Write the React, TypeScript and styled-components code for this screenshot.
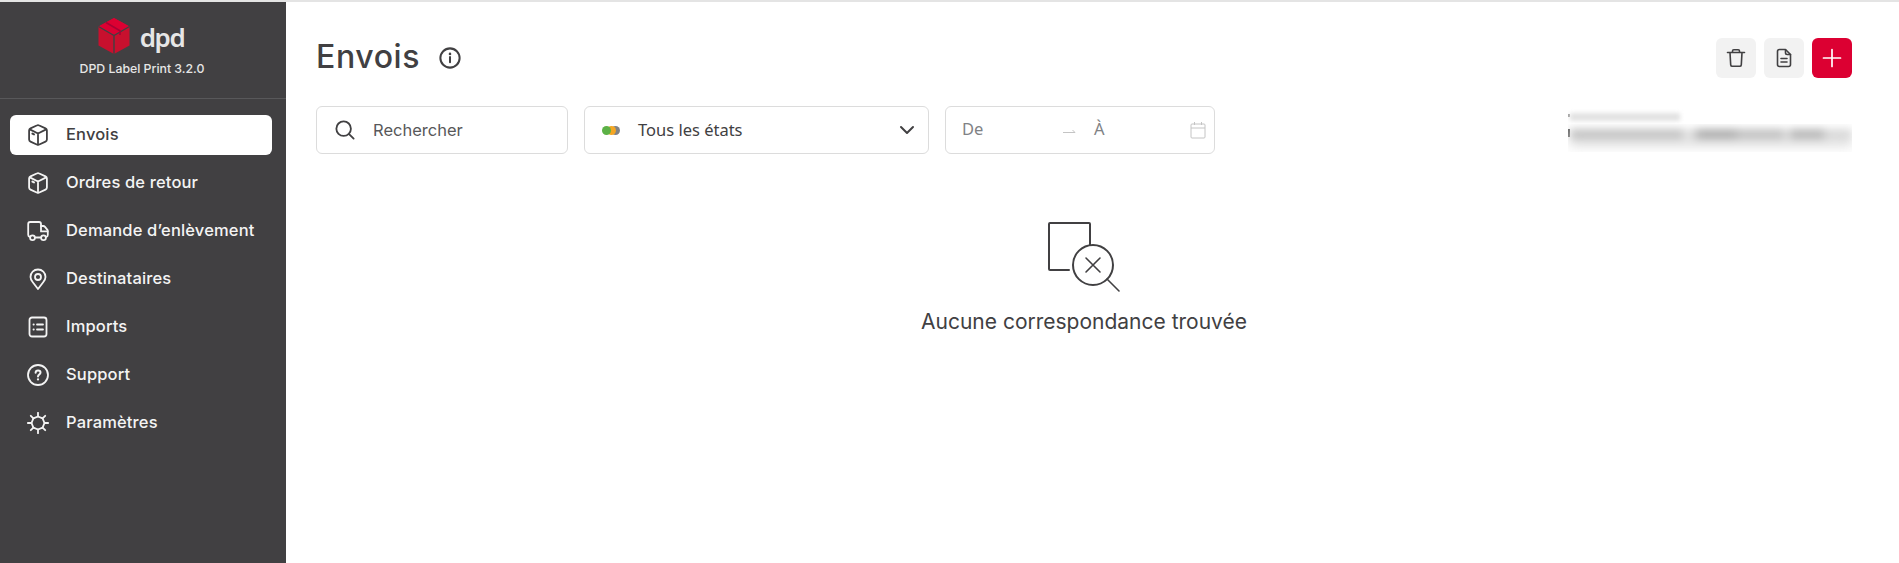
import React from "react";
import styled, { createGlobalStyle } from "styled-components";

const GlobalStyle = createGlobalStyle`
  html, body {
    margin: 0;
    height: 100%;
    overflow: hidden;
    background: #fff;
  }
  #root {
    height: 100%;
  }
`;

const BoxIcon = () => (
  <svg width="22" height="22" viewBox="0 0 22 22" fill="none" stroke="currentColor" strokeWidth="1.8" strokeLinejoin="round" strokeLinecap="round">
    <path d="M9.700 1.500c.8-.4 1.800-.4 2.600 0l6.200 2.900c.9.400 1.400 1.200 1.400 2.200v8.800c0 1-.5 1.800-1.400 2.200l-6.200 2.900c-.8.400-1.800.4-2.600 0l-6.200-2.900c-.9-.4-1.400-1.200-1.400-2.200V6.600c0-1 .5-1.800 1.400-2.200Z" />
    <path d="M2.800 5.400 11 9.500l8.200-4.100M11 9.500v11" />
    <path d="M5.400 9.600l1.600.8" strokeWidth="2" />
  </svg>
);

const TruckIcon = () => (
  <svg width="22" height="22" viewBox="0 0 22 22" fill="none" stroke="currentColor" strokeWidth="1.8" strokeLinejoin="round" strokeLinecap="round">
    <path d="M2.800 17C1.800 16.700 1.200 16 1.200 14.800V4C1.200 2.800 2 2 3.200 2H12c1.200 0 2 .8 2 2v2h2.200c.8 0 1.300.3 1.800.9l2.400 3c.3.4.4.7.4 1.200v3.700c0 1.200-.5 1.900-1.500 2.200" />
    <path d="M14 6v5.400h6.600M8.500 17.500h5" />
    <circle cx="5.500" cy="17.700" r="2.400" />
    <circle cx="16.500" cy="17.700" r="2.400" />
  </svg>
);

const PinIcon = () => (
  <svg width="22" height="22" viewBox="0 0 22 22" fill="none" stroke="currentColor" strokeWidth="1.8" strokeLinejoin="round">
    <path d="M11 21 5.800 14.300C4.400 12.500 3.500 11 3.500 9c0-4.300 3.300-7.500 7.500-7.500s7.500 3.200 7.500 7.500c0 2-.9 3.500-2.300 5.300Z" />
    <circle cx="11" cy="9" r="3" />
  </svg>
);

const ListIcon = () => (
  <svg width="22" height="22" viewBox="0 0 22 22" fill="none" stroke="currentColor" strokeWidth="1.8" strokeLinecap="round">
    <rect x="2.500" y="1.500" width="17" height="19" rx="2.500" />
    <path d="M6.500 8.500h.3M6.500 13.500h.3M10 8.500h6M10 13.500h6" />
  </svg>
);

const HelpIcon = () => (
  <svg width="22" height="22" viewBox="0 0 22 22" fill="none" stroke="currentColor" strokeWidth="1.8" strokeLinecap="round">
    <circle cx="11" cy="11" r="10" />
    <path d="M8.600 8.800c0-1.500 1-2.400 2.500-2.400s2.400.9 2.400 2.200c0 1.900-2.500 2-2.500 3.900" strokeWidth="2" />
    <path d="M11 15.300v.2" strokeWidth="2.200" />
  </svg>
);

const GearIcon = () => (
  <svg width="22" height="22" viewBox="0 0 22 22" fill="none" stroke="currentColor" strokeWidth="1.8" strokeLinecap="round" strokeLinejoin="round">
    <path d="M11 4.500 15.600 6.400 17.500 11 15.600 15.600 11 17.500 6.400 15.600 4.500 11 6.400 6.400Z" />
    <path d="M11 .8v3.700M11 17.500v3.700M.8 11h3.700M17.500 11h3.700M3.800 3.800l2.600 2.600M15.600 15.600l2.600 2.600M18.200 3.800l-2.600 2.600M6.400 15.600l-2.600 2.600" />
  </svg>
);

const menuItems = [
  { label: "Envois", icon: <BoxIcon />, active: true },
  { label: "Ordres de retour", icon: <BoxIcon /> },
  { label: "Demande d’enlèvement", icon: <TruckIcon /> },
  { label: "Destinataires", icon: <PinIcon /> },
  { label: "Imports", icon: <ListIcon /> },
  { label: "Support", icon: <HelpIcon /> },
  { label: "Paramètres", icon: <GearIcon /> },
];

export default function App() {
  return (
    <>
      <GlobalStyle />
      <Page>
        <Sidebar>
          <Brand>
            <LogoRow>
              <svg width="32" height="36" viewBox="0 0 32 36">
                <path d="M16 0 31.500 8.500V27.500L16 36 .5 27.500V8.500Z" fill="#c8102e" />
                <path d="M16 0 31.500 8.500 16 17 .5 8.500Z" fill="#dc0032" />
                <path d="M.5 8.500 16 17.500 31.500 8.500M16 17.500V36" fill="none" stroke="#414042" strokeWidth="1.400" />
                <path d="M8 4.500 22 12.800V17" fill="none" stroke="#a90034" strokeWidth="1.600" />
              </svg>
              <LogoText>dpd</LogoText>
            </LogoRow>
            <Version>DPD Label Print 3.2.0</Version>
          </Brand>
          <Menu>
            {menuItems.map((item) => (
              <MenuItem key={item.label} $active={item.active}>
                <MenuIcon>{item.icon}</MenuIcon>
                <MenuLabel>{item.label}</MenuLabel>
              </MenuItem>
            ))}
          </Menu>
        </Sidebar>
        <Main>
          <Header>
            <TitleGroup>
              <Title>Envois</Title>
              <svg width="22" height="22" viewBox="0 0 24 24" fill="none" stroke="#414042" strokeWidth="2.200" strokeLinecap="round">
                <circle cx="12" cy="12" r="10.500" />
                <path d="M12 11v5.500" />
                <path d="M12 7.500v.1" strokeWidth="2.800" />
              </svg>
            </TitleGroup>
            <Actions>
              <ActionButton>
                <svg width="20" height="20" viewBox="0 0 20 20" fill="none" stroke="#414042" strokeWidth="1.600" strokeLinecap="round" strokeLinejoin="round">
                  <path d="M1.500 4.500h17M6.500 4.500V3c0-.8.5-1.300 1.300-1.300h4.400c.8 0 1.300.5 1.300 1.300v1.500M4 4.500l.7 12.300c.1.900.7 1.500 1.600 1.500h7.400c.9 0 1.500-.6 1.600-1.500l.7-12.300" />
                </svg>
              </ActionButton>
              <ActionButton>
                <svg width="20" height="20" viewBox="0 0 20 20" fill="none" stroke="#414042" strokeWidth="1.600" strokeLinecap="round" strokeLinejoin="round">
                  <path d="M5.500 1.500h6l5 5v10c0 1.200-.9 2-2 2H5.500c-1.100 0-2-.8-2-2v-13c0-1.200.9-2 2-2Z" />
                  <path d="M11.500 1.800v3c0 1 .7 1.700 1.700 1.700h3.300M7 10.500h6M7 14h6" />
                </svg>
              </ActionButton>
              <ActionButton $primary>
                <svg width="20" height="20" viewBox="0 0 20 20" fill="none" stroke="#fff" strokeWidth="1.700" strokeLinecap="round">
                  <path d="M10 1.500v17M1.500 10h17" />
                </svg>
              </ActionButton>
            </Actions>
          </Header>
          <Filters>
            <SearchBox>
              <svg width="20" height="20" viewBox="0 0 22 22" fill="none" stroke="#414042" strokeWidth="2" strokeLinecap="round">
                <circle cx="9.500" cy="9.500" r="8" />
                <path d="M15.500 15.500 20.500 20.500" />
              </svg>
              Rechercher
            </SearchBox>
            <StateSelect>
              <Dots>
                <Dot $color="#808285" $offset={9} />
                <Dot $color="#f5a623" $offset={5} />
                <Dot $color="#5cb146" $offset={0} />
              </Dots>
              <StateLabel>Tous les états</StateLabel>
              <svg width="16" height="10" viewBox="0 0 16 10" fill="none" stroke="#414042" strokeWidth="2" strokeLinecap="round" strokeLinejoin="round">
                <path d="M2 2l6 6 6-6" />
              </svg>
            </StateSelect>
            <DateRange>
              <DateFrom>De</DateFrom>
              <svg width="14" height="8" viewBox="0 0 14 8" fill="none" stroke="#c4c4c4" strokeWidth="1">
                <path d="M1 6.500h12L10.500 4" />
              </svg>
              <DateTo>À</DateTo>
              <svg width="16" height="18" viewBox="0 0 16 18" fill="none" stroke="#c4c4c4" strokeWidth="1">
                <rect x="1" y="3" width="14" height="14" rx="1" />
                <path d="M1 7h14M4.500 1v3M11.500 1v3" />
              </svg>
            </DateRange>
            <BlurredInfo>
              <BlurRow $height={16}>
                <BlurMark $size={3} $top={6} $tone="#9a9a9a" />
                <BlurShort />
              </BlurRow>
              <BlurRow $height={28}>
                <BlurMark $size={8} $top={5} $tone="#5a5a5a" />
                <BlurLong />
              </BlurRow>
            </BlurredInfo>
          </Filters>
          <EmptyState>
            <EmptyIcon width="76" height="76" viewBox="0 0 76 76" fill="none" stroke="#414042" strokeWidth="2" strokeLinecap="round" strokeLinejoin="round">
              <path d="M24 51H5c-.6 0-1-.4-1-1V5c0-.6.4-1 1-1h39c.6 0 1 .4 1 1v21" />
              <circle cx="48" cy="46" r="20" />
              <path d="M41 39l14 14M55 39 41 53" strokeWidth="1.600" />
              <path d="M62 60l12 12" strokeWidth="1.600" />
            </EmptyIcon>
            <EmptyText>Aucune correspondance trouvée</EmptyText>
          </EmptyState>
        </Main>
      </Page>
    </>
  );
}

const Page = styled.div`
  display: flex;
  height: 100%;
  box-sizing: border-box;
  border-top: 2px solid #e4e4e4;
  font-family: Inter, "Liberation Sans", sans-serif;
  color: #414042;
`;

const Sidebar = styled.aside`
  width: 286px;
  flex: none;
  background: #414042;
  color: #fff;
`;

const Brand = styled.div`
  height: 97px;
  box-sizing: border-box;
  padding-top: 16px;
  display: flex;
  flex-direction: column;
  align-items: center;
  border-bottom: 1px solid #58585a;
`;

const LogoRow = styled.div`
  display: flex;
  align-items: center;
  gap: 10px;
  height: 36px;
  margin-right: 4px;
`;

const LogoText = styled.span`
  font-size: 26px;
  font-weight: 600;
  letter-spacing: -1.400px;
  color: #e6e6e6;
  line-height: 30px;
  margin-top: 2px;
  font-family: "Noto Sans", sans-serif;
`;

const Version = styled.div`
  margin: 7px 2px 0 0;
  font-size: 12.300px;
  font-weight: 500;
  color: #e6e6e6;
`;

const Menu = styled.nav`
  padding: 16px 14px 0 10px;
  display: flex;
  flex-direction: column;
  gap: 8px;
`;

const MenuItem = styled.a<{ $active?: boolean }>`
  display: flex;
  align-items: center;
  height: 40px;
  padding-left: 17px;
  border-radius: 6px;
  font-size: 16.500px;
  font-weight: 500;
  letter-spacing: 0.150px;
  background: ${({ $active }) => ($active ? "#fff" : "transparent")};
  color: ${({ $active }) => ($active ? "#414042" : "#f4f4f4")};
`;

const MenuIcon = styled.span`
  width: 22px;
  height: 22px;
  margin-right: 17px;
  display: flex;
`;

const MenuLabel = styled.span`
  margin-bottom: 2px;
`;

const Main = styled.main`
  flex: 1;
  min-width: 0;
  padding: 36px 47px 0 30px;
`;

const Header = styled.header`
  display: flex;
  align-items: center;
  justify-content: space-between;
  height: 40px;
`;

const TitleGroup = styled.div`
  display: flex;
  align-items: center;
  gap: 19px;
`;

const Title = styled.h1`
  margin: 0 0 2px;
  font-size: 32px;
  font-weight: 500;
  letter-spacing: 0.600px;
  line-height: 40px;
`;

const Actions = styled.div`
  display: flex;
  gap: 8px;
`;

const ActionButton = styled.button<{ $primary?: boolean }>`
  width: 40px;
  height: 40px;
  padding: 0;
  border: none;
  border-radius: 6px;
  display: flex;
  align-items: center;
  justify-content: center;
  background: ${({ $primary }) => ($primary ? "#dc0032" : "#f2f2f2")};
`;

const Filters = styled.div`
  display: flex;
  align-items: center;
  margin-top: 28px;
  gap: 16px;
`;

const Field = styled.div`
  height: 48px;
  box-sizing: border-box;
  border: 1px solid #dcdcdc;
  border-radius: 6px;
  display: flex;
  align-items: center;
  background: #fff;
`;

const SearchBox = styled(Field)`
  width: 252px;
  padding-left: 18px;
  gap: 18px;
  font-size: 16.500px;
  color: #58585a;
`;

const StateSelect = styled(Field)`
  width: 345px;
  padding: 0 13px 0 17px;
  font-family: "Noto Sans", sans-serif;
  font-size: 16.500px;
`;

const Dots = styled.span`
  position: relative;
  width: 18px;
  height: 9px;
  margin-right: 18px;
`;

const Dot = styled.i<{ $color: string; $offset: number }>`
  position: absolute;
  top: 0;
  left: ${({ $offset }) => $offset}px;
  width: 9px;
  height: 9px;
  border-radius: 50%;
  background: ${({ $color }) => $color};
`;

const StateLabel = styled.span`
  flex: 1;
  margin-bottom: 1px;
`;

const DateRange = styled(Field)`
  width: 270px;
  padding: 0 8px 0 16px;
  font-family: "Noto Sans", sans-serif;
  font-size: 16.500px;
  color: #808285;
`;

const DateFrom = styled.span`
  width: 100px;
  margin-bottom: 3px;
`;

const DateTo = styled.span`
  margin: 0 0 3px 18px;
  flex: 1;
`;

const BlurredInfo = styled.div`
  width: 284px;
  height: 48px;
  box-sizing: border-box;
  padding-top: 2px;
  margin-left: auto;
  overflow: hidden;
  display: flex;
  flex-direction: column;
`;

const BlurRow = styled.div<{ $height: number }>`
  display: flex;
  align-items: flex-start;
  height: ${({ $height }) => $height}px;
  overflow: hidden;
  flex: none;
`;

const BlurMark = styled.i<{ $size: number; $top: number; $tone: string }>`
  width: 2px;
  height: ${({ $size }) => $size}px;
  margin-top: ${({ $top }) => $top}px;
  background: ${({ $tone }) => $tone};
  filter: blur(0.5px);
  flex: none;
`;

const BlurShort = styled.div`
  width: 110px;
  height: 8px;
  margin-top: 5px;
  background: #e2e2e2;
  filter: blur(2px);
`;

const BlurLong = styled.div`
  flex: 1;
  height: 10px;
  margin-top: 5px;
  background: linear-gradient(
    90deg,
    #c2c2c2 0 40%,
    #e2e2e2 40% 43%,
    #acacac 46% 58%,
    #c0c0c0 60% 76%,
    #e2e2e2 76% 78%,
    #b6b6b6 78% 90%,
    #d8d8d8 90% 100%
  );
  filter: blur(4px);
  box-shadow: 0 8px 6px #e2e2e2;
`;

const EmptyState = styled.div`
  margin-top: 65px;
  display: flex;
  flex-direction: column;
  align-items: center;
  gap: 14px;
`;

const EmptyIcon = styled.svg`
  margin-right: 3px;
`;

const EmptyText = styled.div`
  font-size: 21px;
  color: #414042;
`;
